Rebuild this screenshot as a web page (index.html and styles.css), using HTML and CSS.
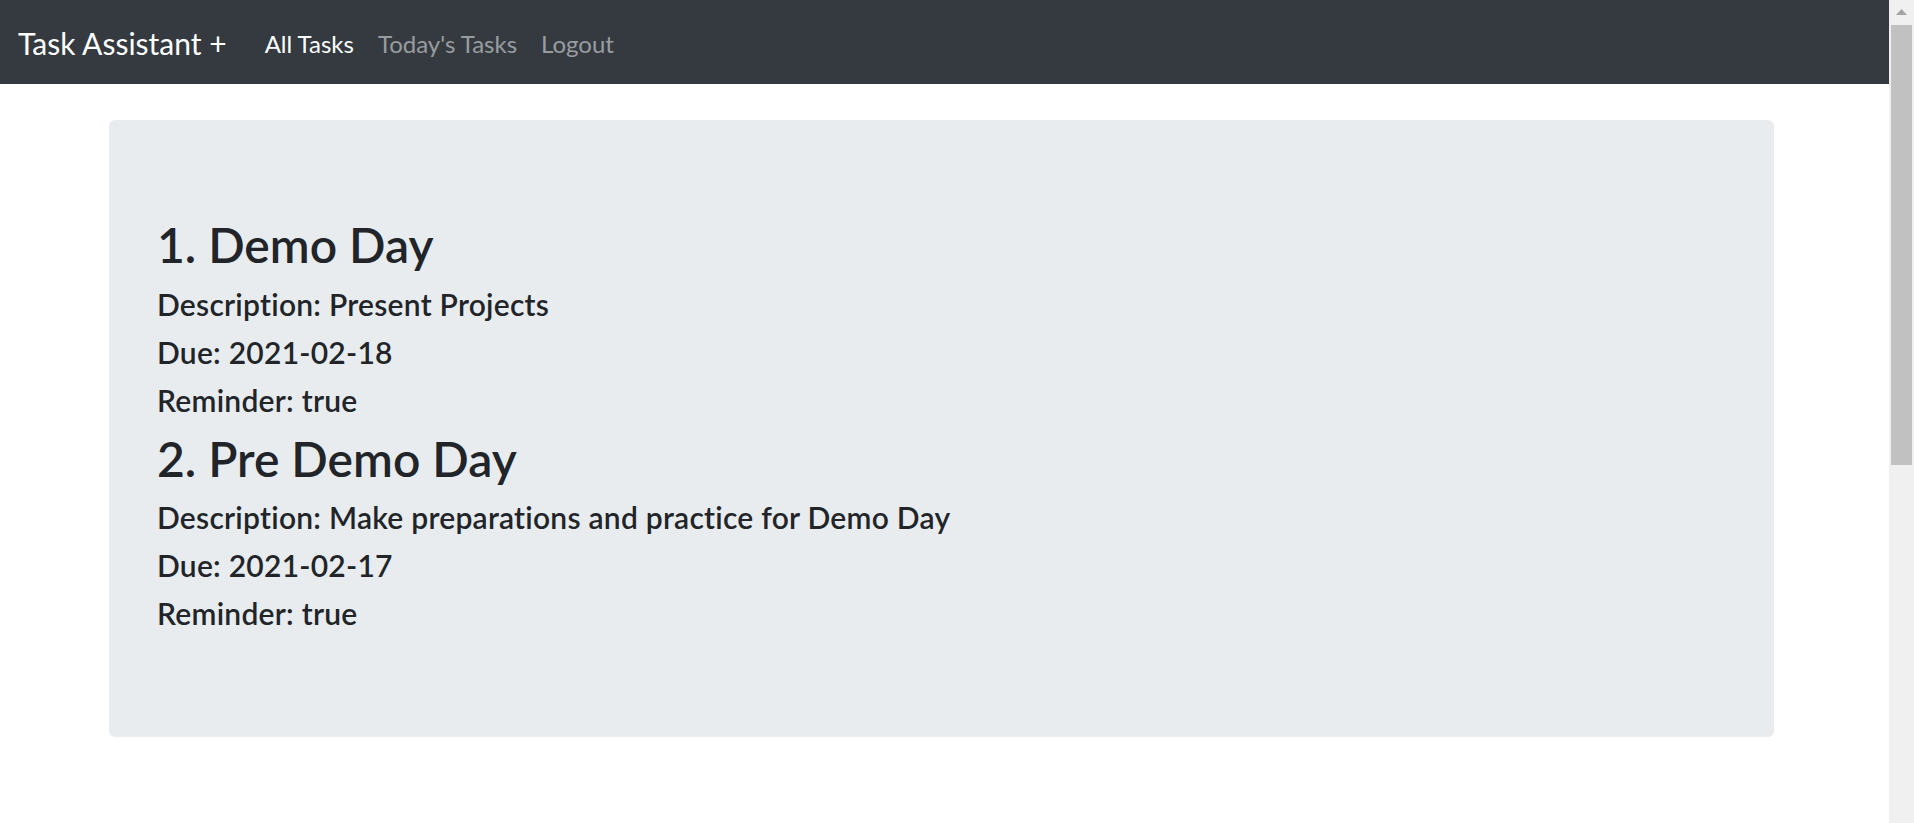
FILE: index.html
```html
<!DOCTYPE html>
<html lang="en">
<head>
<meta charset="utf-8">
<title>Task Assistant +</title>
<link rel="stylesheet" href="styles.css">
</head>
<body>
<div class="page">
  <nav class="navbar">
    <a class="brand" href="#">Task Assistant +</a>
    <div class="nav-links">
      <a class="nav-link active" href="#">All Tasks</a>
      <a class="nav-link" href="#">Today's Tasks</a>
      <a class="nav-link" href="#">Logout</a>
    </div>
  </nav>
  <main class="container">
    <section class="jumbotron">
      <div class="task">
        <h2 class="task-title">1. Demo Day</h2>
        <h5 class="task-line">Description: Present Projects</h5>
        <h5 class="task-line">Due: 2021-02-18</h5>
        <h5 class="task-line">Reminder: true</h5>
      </div>
      <div class="task">
        <h2 class="task-title">2. Pre Demo Day</h2>
        <h5 class="task-line">Description: Make preparations and practice for Demo Day</h5>
        <h5 class="task-line">Due: 2021-02-17</h5>
        <h5 class="task-line">Reminder: true</h5>
      </div>
    </section>
  </main>
</div>
<div class="scrollbar">
  <div class="scroll-btn">
    <svg width="11" height="6" viewBox="0 0 11 6"><polygon points="0,6 5.5,0 11,6" fill="#a3a3a3"/></svg>
  </div>
  <div class="scroll-thumb"></div>
</div>
</body>
</html>
```
FILE: styles.css
```css
html, body {
  margin: 0;
  padding: 0;
  height: 823px;
  overflow: hidden;
}
body {
  display: flex;
  font-family: "Lato", "Liberation Sans", sans-serif;
  color: #212529;
  background: #fff;
}
.page {
  flex: 1;
  min-width: 0;
}
.navbar {
  height: 84px;
  box-sizing: border-box;
  background: #343a40;
  display: flex;
  align-items: center;
  padding: 3px 24px 0 18px;
}
.brand {
  color: #fff;
  font-size: 30px;
  text-decoration: none;
  margin-right: 26px;
  line-height: 45px;
}
.nav-links {
  display: flex;
}
.nav-link {
  font-size: 24px;
  line-height: 36px;
  padding: 0 12px;
  color: rgba(255, 255, 255, 0.5);
  text-decoration: none;
}
.nav-link.active {
  color: #fff;
}
.container {
  padding: 36px 0 0 109px;
}
.jumbotron {
  width: 1665px;
  box-sizing: border-box;
  background: #e9ecef;
  border-radius: 6px;
  padding: 96px 48px 94px;
}
.task-title {
  margin: 0 0 12px;
  font-size: 48px;
  line-height: 57.6px;
  font-weight: 600;
}
.task-line {
  margin: 0 0 12px;
  font-size: 30px;
  line-height: 36px;
  font-weight: 600;
  letter-spacing: 0.25px;
}
.scrollbar {
  width: 25px;
  flex: none;
  background: #f0f0f0;
  display: flex;
  flex-direction: column;
  align-items: stretch;
}
.scroll-btn {
  height: 25px;
  display: flex;
  justify-content: center;
  align-items: center;
}
.scroll-btn svg {
  display: block;
  margin-top: -2px;
}
.scroll-thumb {
  height: 440px;
  margin: 0 2px 0 2px;
  background: #c1c1c1;
}
```
